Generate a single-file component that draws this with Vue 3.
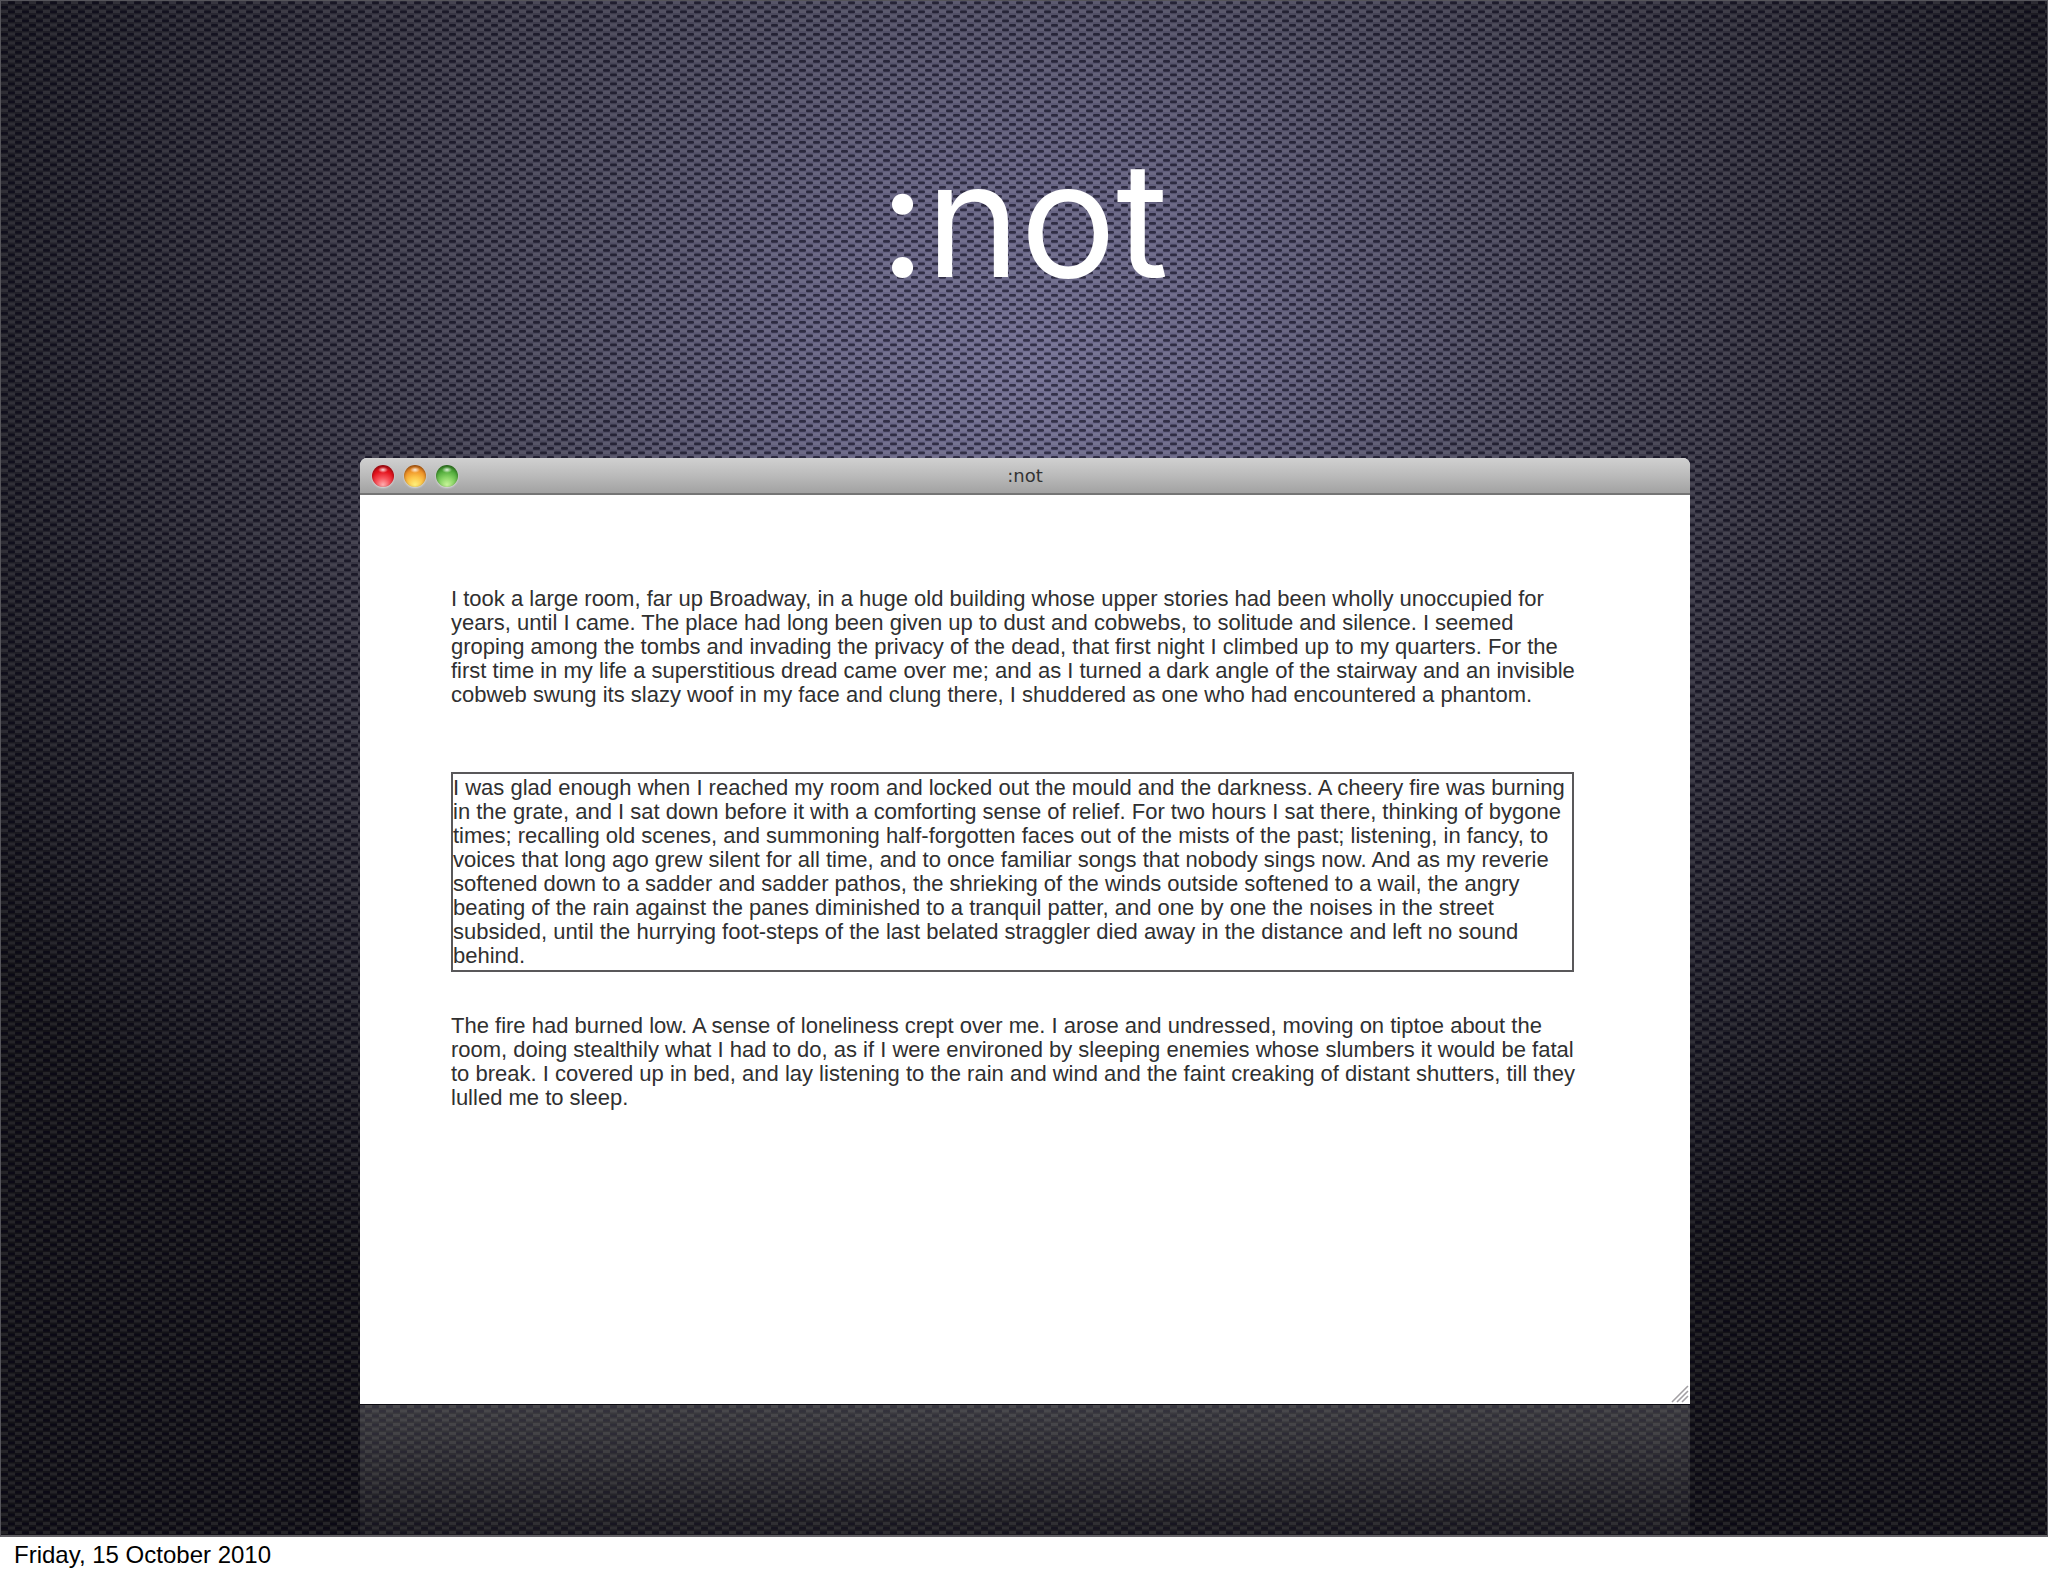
<script setup>
const title = ':not'
const date = 'Friday, 15 October 2010'

const paragraphs = [
  {
    outlined: false,
    text: 'I took a large room, far up Broadway, in a huge old building whose upper stories had been wholly unoccupied for years, until I came. The place had long been given up to dust and cobwebs, to solitude and silence. I seemed groping among the tombs and invading the privacy of the dead, that first night I climbed up to my quarters. For the first time in my life a superstitious dread came over me; and as I turned a dark angle of the stairway and an invisible cobweb swung its slazy woof in my face and clung there, I shuddered as one who had encountered a phantom.',
  },
  {
    outlined: true,
    text: 'I was glad enough when I reached my room and locked out the mould and the darkness. A cheery fire was burning in the grate, and I sat down before it with a comforting sense of relief. For two hours I sat there, thinking of bygone times; recalling old scenes, and summoning half-forgotten faces out of the mists of the past; listening, in fancy, to voices that long ago grew silent for all time, and to once familiar songs that nobody sings now. And as my reverie softened down to a sadder and sadder pathos, the shrieking of the winds outside softened to a wail, the angry beating of the rain against the panes diminished to a tranquil patter, and one by one the noises in the street subsided, until the hurrying foot-steps of the last belated straggler died away in the distance and left no sound behind.',
  },
  {
    outlined: false,
    text: 'The fire had burned low. A sense of loneliness crept over me. I arose and undressed, moving on tiptoe about the room, doing stealthily what I had to do, as if I were environed by sleeping enemies whose slumbers it would be fatal to break. I covered up in bed, and lay listening to the rain and wind and the faint creaking of distant shutters, till they lulled me to sleep.',
  },
]

const lights = [
  { name: 'Close', tone: 'red' },
  { name: 'Minimise', tone: 'amber' },
  { name: 'Zoom', tone: 'green' },
]
</script>

<template>
  <div class="page">
    <main class="slide">
      <svg class="weave" aria-hidden="true">
        <defs>
          <pattern id="weave" width="14" height="9" patternUnits="userSpaceOnUse">
            <rect x="0" y="0" width="7" height="3" fill="#fff" fill-opacity="0.07" />
            <rect x="7" y="4.5" width="7" height="3" fill="#fff" fill-opacity="0.07" />
            <rect x="7" y="0.5" width="7" height="2.8" rx="1.2" fill="#040112" fill-opacity="0.56" />
            <rect x="0" y="5" width="7" height="2.8" rx="1.2" fill="#040112" fill-opacity="0.56" />
          </pattern>
        </defs>
        <rect width="100%" height="100%" fill="url(#weave)" />
      </svg>

      <h1 class="title">{{ title }}</h1>

      <section class="window">
        <header class="titlebar">
          <div class="lights">
            <button
              v-for="light in lights"
              :key="light.tone"
              type="button"
              class="light"
              :class="light.tone"
              :aria-label="light.name"
            ></button>
          </div>
          <span class="caption">{{ title }}</span>
        </header>
        <div class="content">
          <p
            v-for="(paragraph, index) in paragraphs"
            :key="index"
            class="paragraph"
            :class="{ outlined: paragraph.outlined }"
          >{{ paragraph.text }}</p>
        </div>
        <svg class="grip" viewBox="0 0 18 18" aria-hidden="true">
          <path d="M1 17 17 1M6 17 17 6M11 17l6-6" stroke="#a3a0a4" stroke-width="1.6" fill="none" />
        </svg>
      </section>
      <div class="reflection"></div>
    </main>
    <footer class="footer">{{ date }}</footer>
  </div>
</template>

<style>
body {
  margin: 0;
}
</style>

<style scoped>
.page {
  display: flex;
  flex-direction: column;
  min-height: 100vh;
  background: #fff;
  font-family: "Liberation Sans", Arial, Helvetica, sans-serif;
}

.slide {
  position: relative;
  isolation: isolate;
  flex: 1;
  display: flex;
  flex-direction: column;
  box-sizing: border-box;
  border: 1px solid #55545a;
  border-bottom: 2px solid #636166;
  background: radial-gradient(
    ellipse 60% 70% at 50% 24%,
    #726f92 0%,
    #646180 18%,
    #4c4a5e 38%,
    #363441 60%,
    #22212a 82%,
    #141318 100%
  );
}

.weave {
  position: absolute;
  inset: 0;
  z-index: -1;
  width: 100%;
  height: 100%;
}

.title {
  margin: 0;
  padding: 118px 0 139px;
  color: #fff;
  font-family: Inter, Lato, sans-serif;
  font-size: 160px;
  font-weight: 400;
  line-height: 200px;
  text-align: center;
}

.window {
  position: relative;
  flex: 1;
  display: flex;
  flex-direction: column;
  margin: 0 357px 0 359px;
  border-radius: 7px 7px 0 0;
  background: #fff;
  overflow: hidden;
}

.titlebar {
  display: grid;
  grid-template-columns: 1fr auto 1fr;
  align-items: center;
  height: 37px;
  box-sizing: border-box;
  padding: 0 12px;
  border-bottom: 2px solid #757575;
  background: linear-gradient(#d0d0d0, #bdbdbd 45%, #a2a2a2);
}

.lights {
  display: flex;
  gap: 10px;
}

.light {
  width: 22px;
  height: 22px;
  padding: 0;
  border: 0;
  border-radius: 50%;
  box-shadow: 0 1px 2px #ffffff99, inset 0 1px 3px #00000060;
}

.red {
  background:
    radial-gradient(ellipse 5px 3px at 50% 22%, #ffffffd9, transparent),
    radial-gradient(circle at 50% 90%, #ffaeb0 0%, #f8545c 30%, #e3121c 60%, #a80d14 100%);
}

.amber {
  background:
    radial-gradient(ellipse 5px 3px at 50% 22%, #ffffffd9, transparent),
    radial-gradient(circle at 50% 90%, #fff07c 0%, #fdc84c 32%, #ee9026 64%, #b0500f 100%);
}

.green {
  background:
    radial-gradient(ellipse 5px 3px at 50% 22%, #ffffffd9, transparent),
    radial-gradient(circle at 50% 90%, #c8f59a 0%, #8bd667 32%, #4da738 64%, #2a6f1d 100%);
}

.caption {
  color: #333;
  font-family: "DejaVu Sans", sans-serif;
  font-size: 18px;
  line-height: 24px;
}

.content {
  padding: 92px 100px 92px 91px;
}

.paragraph {
  margin: 0;
  color: #303030;
  font-size: 22px;
  line-height: 24px;
}

.outlined {
  margin: 65px 16px 42px 0;
  padding: 2px 0;
  border: 2px solid #59585a;
}

.grip {
  position: absolute;
  right: 1px;
  bottom: 1px;
  width: 18px;
  height: 18px;
}

.reflection {
  height: 130px;
  margin: 0 357px 0 359px;
  border-top: 1px solid #0b0a10;
  background: linear-gradient(#ffffff2b, #ffffff0a);
}

.footer {
  height: 39px;
  box-sizing: border-box;
  padding: 4px 14px;
  color: #000;
  font-size: 24px;
  line-height: 28px;
}
</style>
